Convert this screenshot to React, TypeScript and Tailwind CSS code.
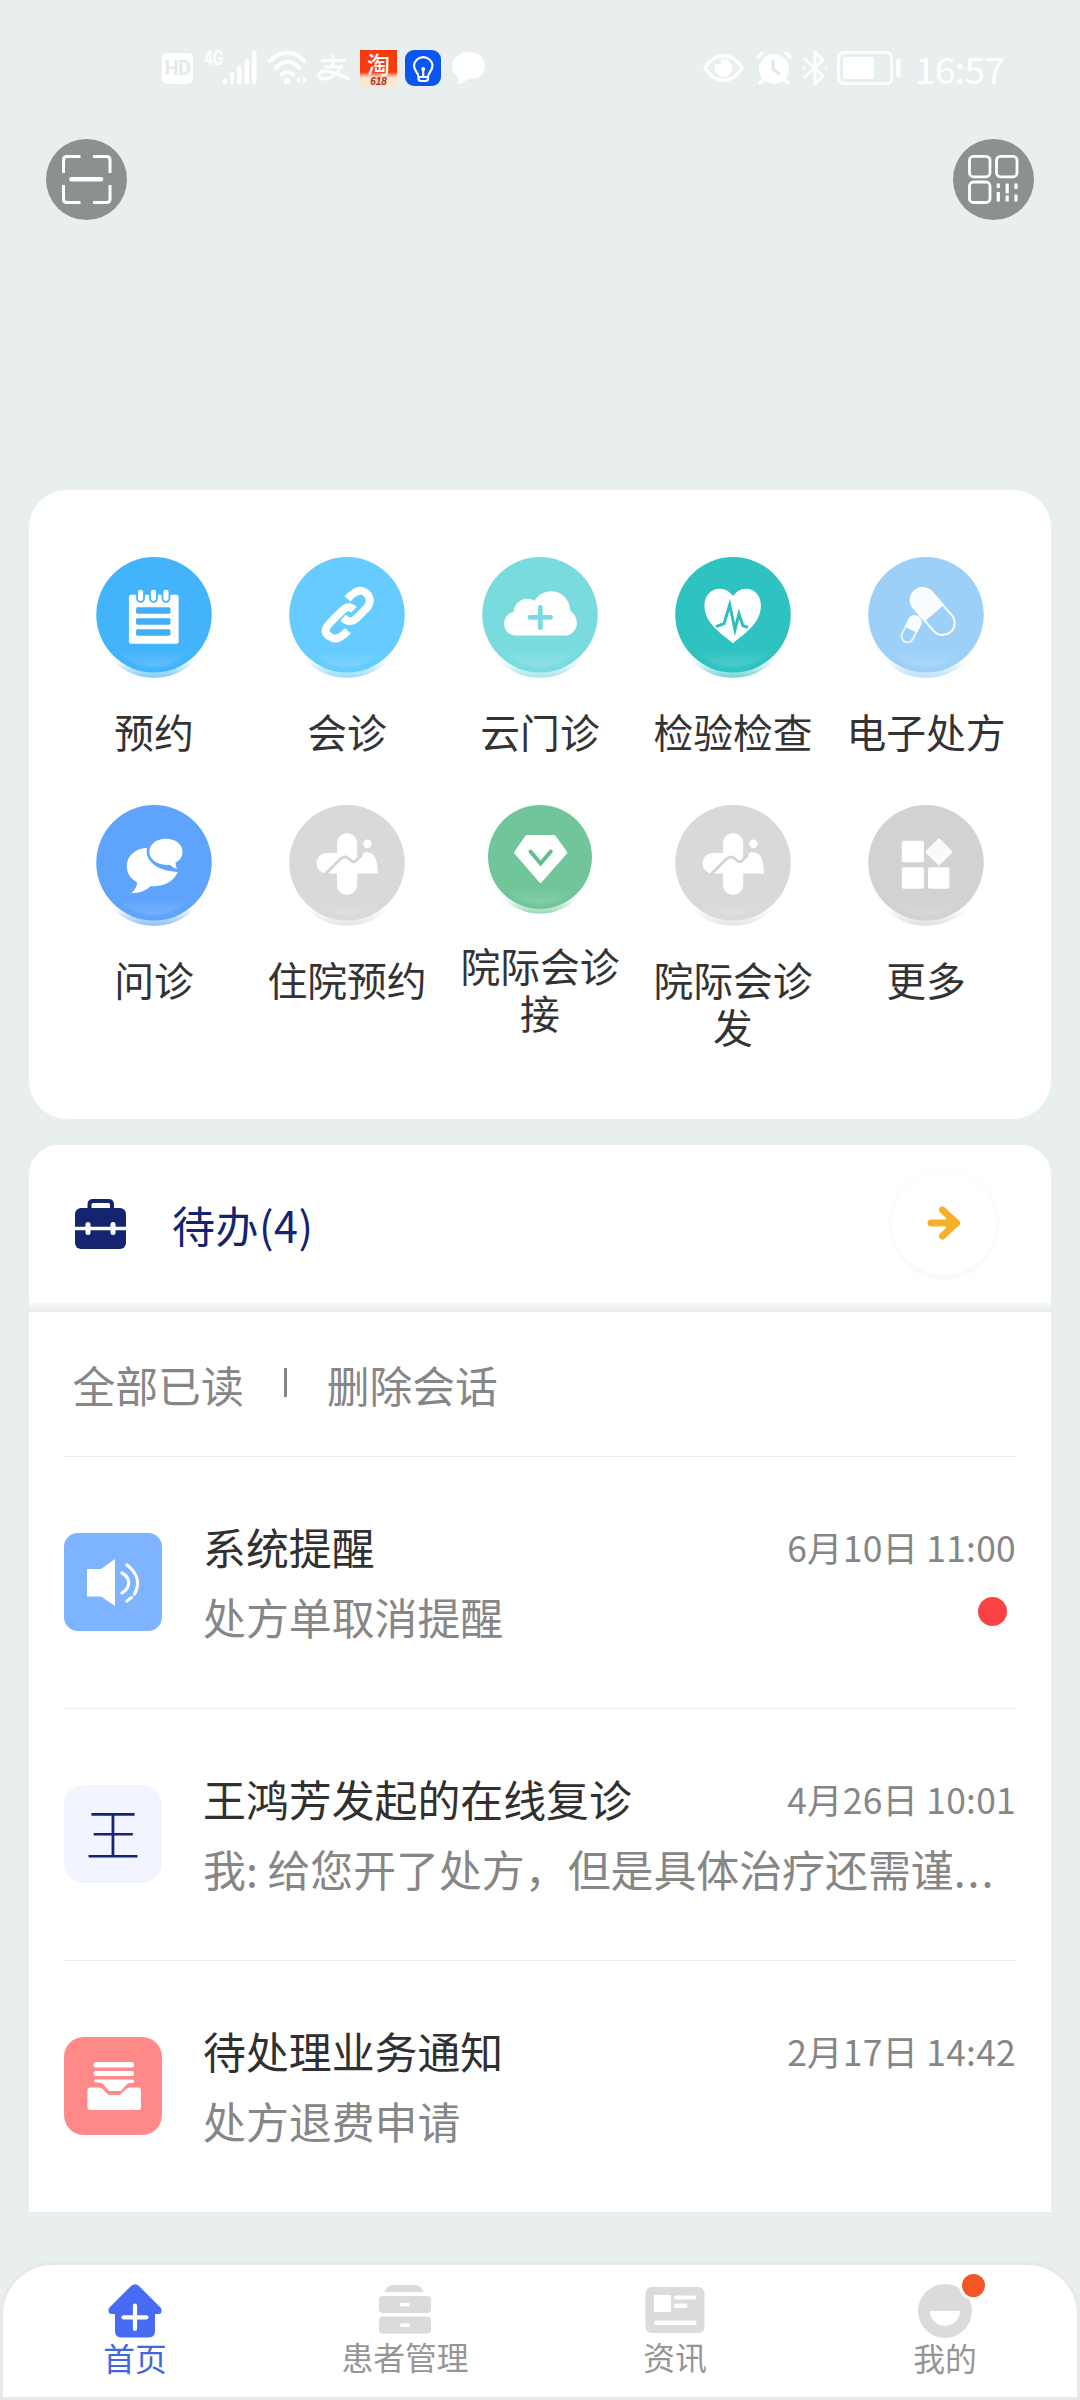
import type { ReactNode } from "react";

const PAGE_BG = "#e9efef";

/* ---------- Status bar ---------- */

function StatusBar() {
  return (
    <div className="flex h-[136px] items-center pl-[162px] pr-[75px] text-white">
      <div className="flex h-[31px] w-[31px] items-center justify-center rounded-[5px] bg-white font-['Roboto',sans-serif] text-[20px] font-bold leading-none tracking-[-0.5px] text-[#e4eaea]">
        HD
      </div>
      <span className="ml-[11px] -mt-[20px] w-[19px] origin-left scale-x-[0.8] font-['Roboto',sans-serif] text-[20px] font-bold leading-none tracking-[-1px]">4G</span>
      <svg className="h-[34px] w-[34px]" viewBox="0 0 34 34" fill="#fff">
        <rect x="0" y="27" width="4" height="6" rx="2" />
        <rect x="7" y="21" width="4" height="12" rx="2" />
        <rect x="14" y="15" width="4.5" height="18" rx="2" />
        <rect x="21.500" y="8" width="4.500" height="25" rx="2" />
        <rect x="29" y="0" width="4.500" height="33" rx="2" />
      </svg>
      <svg className="ml-[11px] h-[36px] w-[40px]" viewBox="0 0 40 36" fill="none" stroke="#fff" strokeWidth="4" strokeLinecap="round">
        <path d="M2 11C12 0 27 0 36 11" />
        <path d="M8 18C15 10 24 10 31 18" />
        <path d="M13.500 24.500C17 21 21.500 21 25 24.500" />
        <circle cx="19" cy="31" r="3.200" fill="#fff" stroke="none" />
        <path d="M32 26v8l-4-4zM35 26v8l4-4z" fill="#fff" stroke="none" />
      </svg>
      <svg className="ml-[9px] h-[28px] w-[34px]" viewBox="0 0 34 28" fill="none" stroke="#fff" strokeLinecap="round" strokeWidth="3">
        <path d="M5 6.500H27M16 2V12M8 13H24C20 21 13 25 7 25C0 25 0 17 8 17C15 17 22 21 31 24.500" />
      </svg>
      <div className="ml-[9px] flex h-[37px] w-[37px] flex-col items-center bg-gradient-to-b from-[#f63b10] from-60% to-[#fbe6cf] to-75%">
        <span className="h-[26px] text-[23px] font-medium leading-[27px]">淘</span>
        <span className="font-['Liberation_Sans',sans-serif] text-[10px] font-bold italic leading-[11px] text-[#b3261c]">618</span>
      </div>
      <svg className="ml-[8px] h-[36px] w-[36px]" viewBox="0 0 36 36" fill="none" stroke="#fff" strokeWidth="2.200">
        <rect width="36" height="36" rx="9" fill="#0b56f0" stroke="none" />
        <path d="M13.500 27C13.500 22 9 21.500 9 15.500A9.300 9.300 0 0 1 27.500 15.500C27.500 21.500 23 22 23 27V28.500Q23 31 20.500 31H16Q13.500 31 13.500 28.500Z" />
        <path d="M18.200 19V26.500M14 27H22.500" />
        <circle cx="18.200" cy="19" r="2" fill="#fff" stroke="none" />
      </svg>
      <svg className="ml-[10px] h-[32px] w-[35px]" viewBox="0 0 35 32" fill="#fff">
        <path d="M18 0C28 0 34 6 34 14C34 23 27 27 19 27C15 27 12 32 6 32C8 29 8 27 7 25C3 23 1 19 1 14C1 6 8 0 18 0Z" />
      </svg>

      <div className="ml-auto flex items-center">
        <svg className="h-[28px] w-[41px]" viewBox="0 0 41 28" fill="none" stroke="#fff" strokeWidth="3.500">
          <path d="M2 14C11-2 30-2 39 14C30 30 11 30 2 14Z" />
          <circle cx="20.500" cy="14" r="9" fill="#fff" stroke="none" />
          <path d="M13 10a6 6 0 0 1 5-5v5z" fill={PAGE_BG} stroke="none" />
        </svg>
        <svg className="ml-[12px] h-[34px] w-[36px]" viewBox="0 0 36 34" fill="none" stroke="#fff" strokeWidth="3.500" strokeLinecap="round">
          <circle cx="18" cy="18" r="15" fill="#fff" stroke="none" />
          <path d="M2 6L6 2M34 6L30 2M7 29L4 32M29 29L32 32" />
          <path d="M17 10V18L23 23" stroke="#e1e8e9" strokeWidth="3" />
        </svg>
        <svg className="ml-[9px] h-[38px] w-[28px]" viewBox="0 0 28 38" fill="none" stroke="#fff" strokeWidth="3" strokeLinejoin="round" strokeLinecap="round">
          <path d="M4 10L22 27L14 35V3L22 11L4 28" />
          <path d="M2 17v4l3-2zM26 17v4l-3-2z" fill="#fff" stroke="none" />
        </svg>
        <svg className="ml-[8px] h-[34px] w-[64px]" viewBox="0 0 64 34" fill="none" stroke="#fff" strokeWidth="3">
          <rect x="1.500" y="1.500" width="53" height="31" rx="5" />
          <rect x="6" y="6" width="31" height="22" rx="2" fill="#fff" stroke="none" />
          <rect x="59" y="8" width="4.500" height="18" rx="2" fill="#fff" stroke="none" />
        </svg>
        <span className="ml-[14px] w-[90px] text-[37px] leading-none tracking-[-0.6px]">16:57</span>
      </div>
    </div>
  );
}

/* ---------- Round action buttons ---------- */

function TopActions() {
  return (
    <div className="mt-[3px] flex justify-between px-[46px]">
      <button className="h-[81px] w-[81px] rounded-full bg-[#8b9090]" aria-label="扫一扫">
        <svg viewBox="0 0 81 81" fill="none" stroke="#fff" strokeWidth="3">
          <path d="M17.500 34V21Q17.500 17.500 21 17.500H34.500M47 17.500H60.500Q64 17.500 64 21V34M17.500 46V60Q17.500 63.500 21 63.500H34.500M47 63.500H60.500Q64 63.500 64 60V46" />
          <path d="M25.500 40.300H55" strokeWidth="4.600" strokeLinecap="round" />
        </svg>
      </button>
      <button className="h-[81px] w-[81px] rounded-full bg-[#8b9090]" aria-label="二维码">
        <svg viewBox="0 0 81 81" fill="none" stroke="#fff" strokeWidth="2.800">
          <rect x="16.500" y="17.300" width="20.500" height="20.500" rx="4" />
          <rect x="43.500" y="17.300" width="20.500" height="20.500" rx="4" />
          <rect x="16.500" y="43" width="20.500" height="20.500" rx="4" />
          <path d="M45.300 44.500V49M45.300 53V62.500M54.200 44.500V54.500M54.200 56.500V62.500M63 44.500V50M63 55.500V62.500" strokeWidth="3.200" />
        </svg>
      </button>
    </div>
  );
}

/* ---------- Service grid ---------- */

function Disc({ id, color, small, children }: { id: string; color: string; small?: boolean; children: ReactNode }) {
  return (
    <svg className={small ? "h-[109px] w-[104px]" : "h-[121px] w-[116px]"} viewBox="0 0 116 121.500">
      <defs>
        <linearGradient id={`${id}-s`} gradientUnits="userSpaceOnUse" x1="0" y1="104" x2="0" y2="121">
          <stop offset="0" stopColor={color} stopOpacity="0" />
          <stop offset="1" stopColor={color} stopOpacity="0.7" />
        </linearGradient>
        <linearGradient id={`${id}-h`} gradientUnits="userSpaceOnUse" x1="0" y1="94" x2="0" y2="111">
          <stop offset="0" stopColor="#fff" stopOpacity="0" />
          <stop offset="1" stopColor="#fff" stopOpacity="0.16" />
        </linearGradient>
        <filter id={`${id}-b`}>
          <feGaussianBlur stdDeviation="1" />
        </filter>
        <clipPath id={`${id}-c`}>
          <circle cx="58" cy="58" r="58" />
        </clipPath>
      </defs>
      <circle cx="58" cy="63.300" r="58" fill={`url(#${id}-s)`} />
      <circle cx="58" cy="58" r="58" fill={color} />
      <g clipPath={`url(#${id}-c)`}>
        <ellipse cx="58" cy="80" rx="40" ry="30.500" fill={`url(#${id}-h)`} filter={`url(#${id}-b)`} />
      </g>
      {children}
    </svg>
  );
}

function NotepadGlyph() {
  return (
    <g>
      <rect x="32.800" y="38" width="50" height="49" rx="2" fill="#fff" />
      {[44.500, 57.500, 70].map((x) => (
        <rect key={x} x={x - 3.500} y="32" width="7" height="13" rx="3.500" fill="#fff" stroke="#43b4fc" strokeWidth="1.800" />
      ))}
      {[50.500, 61.500, 72.500].map((y) => (
        <rect key={y} x="40" y={y} width="34.500" height="6.500" rx="1.500" fill="#43aef8" />
      ))}
    </g>
  );
}

function LinkGlyph() {
  return (
    <g fill="none" stroke="#fff" strokeWidth="8" strokeLinejoin="round">
      <path d="M58.500 42C66 33.500 72 32 77 36C82 40 82 46 78 51L67 62C63 65.500 59 65.500 54 61" />
      <path d="M65 53C61 49 57 50 53 54L42 65C35 72 35 76 40 79.500C46 84 51 82 59 74" />
    </g>
  );
}

function CloudGlyph() {
  return (
    <g>
      <path
        d="M33.500 78.700C27 78.700 22 73.500 22 67C22 61 26 56.500 31.500 55C32 47.500 38 42 45 42C48 42 50.500 43 52.500 44C56 38 62 34.500 69.500 34.500C80 34.500 88 43 88.500 54C92.500 57 95 61.500 95 66.500C95 73 90 78.700 83.500 78.700Z"
        fill="#fff"
      />
      <path d="M58.300 50.500V71M48 60.700H68.700" stroke="#7adbdf" strokeWidth="4.800" strokeLinecap="round" />
    </g>
  );
}

function HeartGlyph() {
  return (
    <g>
      <path d="M58 86.500C46 77 29.300 66 29.300 49C29.300 39 36 32 44.500 32C50.500 32 55 35 58 39.500C61 35 65.500 32 71 32C80 32 86 39 86 49C86 66 70 77 58 86.500Z" fill="#fff" />
      <path d="M41 70L49 67L54.700 48L60 73L64 57L68 69L73 70.500" fill="none" stroke="#2ebfbd" strokeWidth="3" strokeMiterlimit="8" />
    </g>
  );
}

function PillsGlyph() {
  return (
    <g fill="none" stroke="#fff">
      <g transform="rotate(-41 64.700 54.700)" strokeWidth="2">
        <rect x="52.700" y="27.500" width="24" height="54.500" rx="12" />
        <path d="M52.700 56V39.500a12 12 0 0 1 24 0V56Z" fill="#fff" fillOpacity="0.920" />
      </g>
      <g transform="rotate(27 43 72.500)" strokeWidth="1.800">
        <rect x="37" y="58.500" width="12" height="28" rx="6" strokeOpacity="0.800" />
        <path d="M37 72V64.500a6 6 0 0 1 12 0V72Z" fill="#fff" fillOpacity="0.920" />
      </g>
    </g>
  );
}

function ChatGlyph() {
  return (
    <g fill="#fff">
      <path d="M82 67C78 77 68 82 54.500 81.500C50 86 43 88.500 35 88.500C39 85 41 82 41 77.500C34 73.500 30.700 68.500 30.700 61.500C30.700 51 39 44 51 43C49 55 60 67 82 67Z" />
      <path
        d="M70 32.500C80 32.500 88 38.500 88 47C88 52 85.500 56 81 58.500C81 61.500 82 63.500 84.500 66C80 66 76 64 73.500 61.500C61 62 52 56 52 47C52 38.500 60 32.500 70 32.500Z"
        stroke="#5ea3fc"
        strokeWidth="2.600"
      />
    </g>
  );
}

function MedicalGlyph() {
  return (
    <g>
      <rect x="47.900" y="28.300" width="20.300" height="62" rx="10" fill="#fff" />
      <path d="M37.500 48.300H68C71 48.300 73 47.500 78 47.500C86 47.500 89 56 89 68.700H37.500A10.200 10.200 0 0 1 37.500 48.300Z" fill="#fff" />
      <path d="M68.200 46V54L65 56.500L75 48.500V46Z" fill="#d9d9d9" />
      <path d="M36 69.500L51 54.500Q55.500 50.500 59.500 53.500L62.500 56.300Q65 58 67.500 55.500L73 50" fill="none" stroke="#d4d4d4" strokeWidth="2.800" />
      <circle cx="78.500" cy="39" r="4.300" fill="#fff" />
    </g>
  );
}

function GemGlyph() {
  return (
    <g transform="scale(1.115)">
      <path d="M38.500 31H66.500L78.500 47.500L52.500 77L27 47.500Z" fill="#fff" stroke="#fff" strokeWidth="2" strokeLinejoin="round" />
      <path d="M42.500 46.500L52.600 58.500L62.800 46.500" fill="none" stroke="#63bd8f" strokeWidth="4" strokeLinecap="round" />
    </g>
  );
}

function MoreGlyph() {
  return (
    <g fill="#fff">
      <rect x="33.700" y="36" width="22.300" height="21.500" rx="2" />
      <rect x="33.700" y="62.500" width="22.300" height="21.500" rx="2" />
      <rect x="60" y="62.500" width="21.500" height="21.500" rx="2" />
      <rect x="61" y="37" width="20" height="20" rx="2" transform="rotate(45 71 47)" fillOpacity="0.880" />
    </g>
  );
}

const services = [
  { id: "yuyue", label: "预约", color: "#43b4fc", glyph: <NotepadGlyph /> },
  { id: "huizhen", label: "会诊", color: "#66cbfe", glyph: <LinkGlyph /> },
  { id: "yun", label: "云门诊", color: "#7adbdf", glyph: <CloudGlyph /> },
  { id: "jianyan", label: "检验检查", color: "#2ec3c1", glyph: <HeartGlyph /> },
  { id: "chufang", label: "电子处方", color: "#9dd0f8", glyph: <PillsGlyph /> },
  { id: "wenzhen", label: "问诊", color: "#5ea3fc", glyph: <ChatGlyph /> },
  { id: "zhuyuan", label: "住院预约", color: "#d9d9d9", glyph: <MedicalGlyph /> },
  { id: "jie", label: "院际会诊接", color: "#70c69a", glyph: <GemGlyph />, small: true },
  { id: "fa", label: "院际会诊发", color: "#d9d9d9", glyph: <MedicalGlyph /> },
  { id: "more", label: "更多", color: "#d2d2d2", glyph: <MoreGlyph /> },
];

function ServiceCard() {
  return (
    <section className="mx-[29px] mt-[270px] h-[629px] rounded-[38px] bg-white px-[28.500px] pt-[67px]">
      <div className="grid auto-rows-[248px] grid-cols-5">
        {services.map((s) => (
          <div key={s.id} className="flex flex-col items-center">
            <Disc id={s.id} color={s.color} small={s.small}>
              {s.glyph}
            </Disc>
            <span className={`${s.small ? "mt-[27px]" : "mt-[29px]"} w-[161px] text-center text-[39.800px] leading-[47px] text-[#333]`}>
              {s.label}
            </span>
          </div>
        ))}
      </div>
    </section>
  );
}

/* ---------- To-do list ---------- */

function SpeakerTile() {
  return (
    <div className="h-[98px] w-[98px] rounded-[14px] bg-[#7eb4ff]">
      <svg viewBox="0 0 98 98" fill="none" stroke="#fff" strokeWidth="3.200" strokeLinecap="round">
        <path d="M23 36H37L51 26V73L37 63.500H23Z" fill="#fff" stroke="none" />
        <path d="M58 40C67 45 67 54 58 60M63 32C76 42 75 53 70.500 61M67.500 64.500L63 68" />
      </svg>
    </div>
  );
}

function NameTile() {
  return (
    <div className="flex h-[98px] w-[98px] items-center justify-center rounded-[20px] bg-[#f2f5ff] pb-[6px] text-[55px] font-light leading-none text-[#14246e]">
      王
    </div>
  );
}

function InboxTile() {
  return (
    <div className="h-[98px] w-[98px] rounded-[20px] bg-[#ff8888]">
      <svg viewBox="0 0 98 98" fill="#fff">
        <rect x="29.500" y="25" width="40.500" height="5.500" rx="2" />
        <rect x="29.500" y="34" width="40.500" height="5" rx="2" />
        <path d="M31 42.500H69Q71 44 69 46H66Q64 46 62 48L57 54H45L39 47Q37.500 45.500 35 45.500H31Q29 44 31 42.500Z" />
        <path d="M26 50.500H35Q37.500 50.500 39 52.500L43 56.500Q44.500 58 46.500 58H54Q56 58 57.500 56.500L61.500 52.500Q63.500 50.500 66 50.500H74.500Q77 50.500 77 53V70.500Q77 73 74.500 73H26Q23.500 73 23.500 70.500V53Q23.500 50.500 26 50.500Z" />
      </svg>
    </div>
  );
}

const messages = [
  { title: "系统提醒", body: "处方单取消提醒", date: "6月10日 11:00", unread: true, tile: <SpeakerTile /> },
  { title: "王鸿芳发起的在线复诊", body: "我: 给您开了处方，但是具体治疗还需谨", truncated: true, date: "4月26日 10:01", unread: false, tile: <NameTile /> },
  { title: "待处理业务通知", body: "处方退费申请", date: "2月17日 14:42", unread: false, tile: <InboxTile /> },
];

function TodoCard() {
  return (
    <section className="mx-[29px] mt-[26px]">
      <header className="flex h-[158px] items-center rounded-t-[30px] bg-white pl-[46px] pr-[55px]">
        <svg className="-mt-[1px] h-[50px] w-[51px]" viewBox="0 0 51 50">
          <path d="M14.500 10V5.500Q14.500 2 18 2H33.500Q37 2 37 5.500V10" fill="none" stroke="#14246e" strokeWidth="4" />
          <rect y="9" width="51" height="41" rx="6" fill="#14246e" />
          <path d="M0 29.500H51" stroke="#fff" strokeWidth="3.600" />
          <rect x="10.500" y="23" width="5" height="13" rx="2.500" fill="#fff" />
          <rect x="35.500" y="23" width="5" height="13" rx="2.500" fill="#fff" />
        </svg>
        <h2 className="ml-[46px] text-[43px] leading-none tracking-[0.5px] text-[#14246e]">待办(4)</h2>
        <button className="-mt-[3px] ml-auto flex h-[104px] w-[104px] items-center justify-center rounded-full bg-white shadow-[0_2px_7px_rgba(90,100,150,0.07)]" aria-label="查看待办">
          <svg className="-ml-[1px] h-[36px] w-[34px]" viewBox="0 0 34 36" fill="none" stroke="#f7b02c" strokeWidth="7" strokeLinecap="round" strokeLinejoin="round">
            <path d="M4 18H26M15.500 5L29.500 18L15.500 31" />
            <path d="M20 13L27 18L20 23Z" fill="#f7b02c" strokeWidth="2" />
          </svg>
        </button>
      </header>
      <div className="h-[9px] bg-gradient-to-b from-[#f8f9f9] to-[#eaecee]" />
      <div className="bg-white px-[35px]">
        <div className="flex h-[144px] items-center pl-[8.500px] text-[42.800px] leading-none text-[#868686]">
          <span>全部已读</span>
          <span className="-mt-[4px] ml-[40px] h-[29px] w-[3px] bg-[#868686]" />
          <span className="ml-[40px]">删除会话</span>
        </div>
        {messages.map((m) => (
          <article key={m.title} className="flex h-[252px] border-t border-[#ebeded] pt-[76px]">
            {m.tile}
            <div className="-mt-[2.500px] ml-[41px] min-w-0 flex-1 whitespace-nowrap">
              <div className="flex h-[32px] items-center justify-between">
                <h3 className="text-[42.900px] leading-none text-[#303030]">{m.title}</h3>
                <time className="text-[35.400px] leading-none tracking-[0.25px] text-[#868686]">{m.date}</time>
              </div>
              <div className="mt-[38px] flex h-[32px] items-center justify-between">
                <p className="text-[42.900px] leading-none text-[#868686]">
                  {m.body}
                  {m.truncated && <span className="tracking-[2px]">...</span>}
                </p>
                {m.unread && <span className="-mt-[10px] mr-[9px] h-[29px] w-[29px] rounded-full bg-[#fa4144]" />}
              </div>
            </div>
          </article>
        ))}
      </div>
    </section>
  );
}

/* ---------- Bottom navigation ---------- */

function HomeIcon() {
  return (
    <svg className="h-[54px] w-[54px]" viewBox="0 0 54 54">
      <path d="M23 2Q27-1.500 31 2L53 24Q55 30 50 30H47V47Q47 53.500 40.500 53.500H13.500Q7 53.500 7 47V30H4Q-1 30 1 24Z" fill="#486bf4" />
      <path d="M27 21.500V45M15.500 33.300H38.500" stroke="#fff" strokeWidth="4.200" strokeLinecap="round" />
    </svg>
  );
}

function CabinetIcon() {
  return (
    <svg className="h-[54px] w-[54px]" viewBox="0 0 54 54" fill="#dbdbdb">
      <path d="M14 2H38Q41 2 43 5L46 9H6L9 5Q11 2 14 2Z" />
      <rect x="1" y="13" width="52" height="17" rx="4" />
      <rect x="1" y="33.500" width="52" height="17" rx="4" />
      <rect x="22" y="20" width="10" height="3.500" rx="1.700" fill="#fff" />
      <rect x="22" y="40.500" width="10" height="3.500" rx="1.700" fill="#fff" />
    </svg>
  );
}

function NewsIcon() {
  return (
    <svg className="h-[54px] w-[60px]" viewBox="0 0 60 54" fill="#fff">
      <rect x="0.500" y="4" width="59" height="46" rx="6" fill="#dbdbdb" />
      <rect x="9" y="12" width="17" height="17" />
      <rect x="29" y="12.500" width="22.500" height="4" rx="2" />
      <rect x="29" y="20.500" width="13.500" height="4.500" rx="2" />
      <rect x="9" y="37.500" width="42.500" height="4.500" rx="2" />
    </svg>
  );
}

function FaceIcon() {
  return (
    <div className="relative h-[54px] w-[54px]">
      <svg viewBox="0 0 54 54">
        <circle cx="27" cy="27" r="27" fill="#dbdbdb" />
        <path d="M12 27H42A15 15 0 0 1 12 27Z" fill="#fff" />
      </svg>
      <span className="absolute -right-[16px] -top-[13px] h-[29px] w-[29px] rounded-full border-[3px] border-white bg-[#f35626]" />
    </div>
  );
}

const tabs = [
  { label: "首页", icon: <HomeIcon />, tone: "text-[#4566da]", offset: "pt-[19px]" },
  { label: "患者管理", icon: <CabinetIcon />, tone: "text-[#959595]", offset: "pt-[18px]" },
  { label: "资讯", icon: <NewsIcon />, tone: "text-[#959595]", offset: "pt-[18px]" },
  { label: "我的", icon: <FaceIcon />, tone: "text-[#959595]", offset: "pt-[19px]" },
];

function TabBar() {
  return (
    <nav className="mt-auto h-[138px] rounded-t-[53px] border-[3px] border-[#e8e8ea] bg-white">
      <div className="-mx-[3px] grid grid-cols-4">
        {tabs.map((t) => (
          <div key={t.label} className={`flex flex-col items-center ${t.offset}`}>
            {t.icon}
            <span className={`mt-[3px] text-[31.800px] leading-[32px] ${t.tone}`}>{t.label}</span>
          </div>
        ))}
      </div>
    </nav>
  );
}

export default function App() {
  return (
    <main className="flex h-[2400px] w-[1080px] flex-col overflow-hidden bg-[#e9efef] font-['Noto_Sans_CJK_SC',sans-serif]">
      <StatusBar />
      <TopActions />
      <ServiceCard />
      <TodoCard />
      <TabBar />
    </main>
  );
}
